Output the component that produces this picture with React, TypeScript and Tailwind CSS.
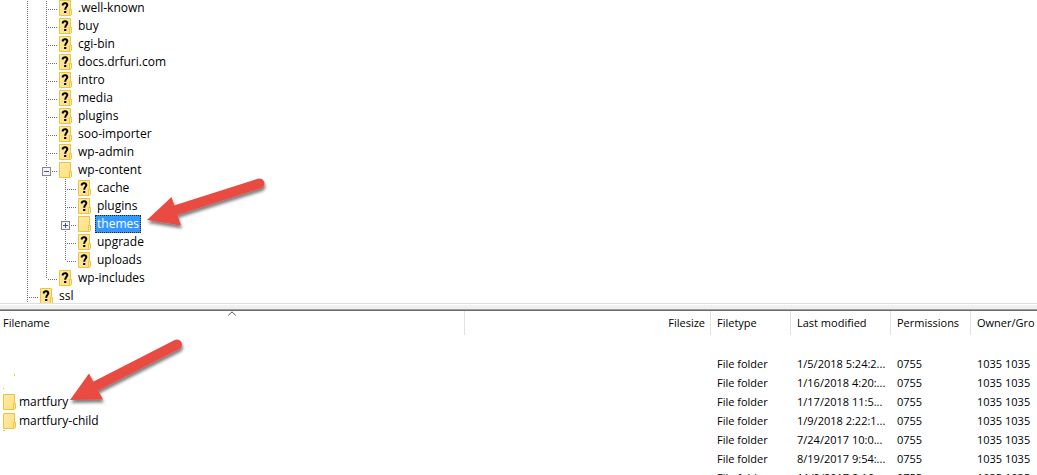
import React from "react";

type Kind = "pass" | "tee" | "end";
type Node = { name: string; guides: Kind[]; known?: boolean; expander?: "plus" | "minus"; selected?: boolean };

const nodes: Node[] = [
  { name: ".well-known", guides: ["pass", "tee"] },
  { name: "buy", guides: ["pass", "tee"] },
  { name: "cgi-bin", guides: ["pass", "tee"] },
  { name: "docs.drfuri.com", guides: ["pass", "tee"] },
  { name: "intro", guides: ["pass", "tee"] },
  { name: "media", guides: ["pass", "tee"] },
  { name: "plugins", guides: ["pass", "tee"] },
  { name: "soo-importer", guides: ["pass", "tee"] },
  { name: "wp-admin", guides: ["pass", "tee"] },
  { name: "wp-content", guides: ["pass", "tee"], known: true, expander: "minus" },
  { name: "cache", guides: ["pass", "pass", "tee"] },
  { name: "plugins", guides: ["pass", "pass", "tee"] },
  { name: "themes", guides: ["pass", "pass", "tee"], known: true, expander: "plus", selected: true },
  { name: "upgrade", guides: ["pass", "pass", "tee"] },
  { name: "uploads", guides: ["pass", "pass", "end"] },
  { name: "wp-includes", guides: ["pass", "end"] },
  { name: "ssl", guides: ["tee"] },
];

type FileRow = { name: string; type: string; date: string; perm: string; owner: string; specks?: string };

const files: FileRow[] = [
  { name: "", type: "", date: "", perm: "", owner: "" },
  { name: "", type: "File folder", date: "1/5/2018 5:24:2...", perm: "0755", owner: "1035 1035" },
  { name: "", type: "File folder", date: "1/16/2018 4:20:...", perm: "0755", owner: "1035 1035", specks: "M11 1h1v2h-1zM0 15h1v1h-1z" },
  { name: "martfury", type: "File folder", date: "1/17/2018 11:5...", perm: "0755", owner: "1035 1035" },
  { name: "martfury-child", type: "File folder", date: "1/9/2018 2:22:1...", perm: "0755", owner: "1035 1035" },
  { name: "", type: "File folder", date: "7/24/2017 10:0...", perm: "0755", owner: "1035 1035", specks: "M0 0h2v1h-2z" },
  { name: "", type: "File folder", date: "8/19/2017 9:54:...", perm: "0755", owner: "1035 1035" },
  { name: "", type: "File folder", date: "11/9/2017 2:16:...", perm: "0755", owner: "1035 1035" },
];

function Guide({ kind }: { kind: Kind }) {
  const branch = kind !== "pass";
  return (
    <svg className={branch ? "h-[18px] w-[13px] shrink-0" : "h-[18px] w-[19px] shrink-0"} shapeRendering="crispEdges" stroke="#6e6e6e" fill="none" aria-hidden="true">
      <path d={kind === "end" ? "M.5 0V10" : "M.5 0V18"} strokeDasharray="1 1" />
      {branch && <path d="M2 10.5H12" strokeDasharray="1 1" />}
    </svg>
  );
}

function Folder({ unknown }: { unknown?: boolean }) {
  return (
    <svg className="h-4 w-[13px] shrink-0" viewBox="0 0 13 16" aria-hidden="true">
      <defs>
        <linearGradient id="folder" x1="0" y1="0" x2="1" y2="1">
          <stop offset="0" stopColor="#ffeaa5" />
          <stop offset="1" stopColor="#ffdf80" />
        </linearGradient>
      </defs>
      <path d="M.5 .5H11.5V15.5H.5Z" fill="url(#folder)" stroke="#ebc540" />
      <path d="M10.5 9.5H12.5V14.5L11.5 15.5H10.5Z" fill="#ffe9a2" stroke="#ebc540" />
      {unknown && (
        <g>
          <path d="M3.8 5.4V4.2C4.600 2.700 8.300 2.700 8.300 5.100C8.300 6.900 6.200 6.900 6.200 9.700" fill="none" stroke="#000" strokeWidth="2" />
          <path d="M5.100 11H7.300V13H5.100Z" fill="#000" />
        </g>
      )}
    </svg>
  );
}

function Expander({ kind, label }: { kind: "plus" | "minus"; label: string }) {
  return (
    <button type="button" aria-label={`Toggle ${label}`} aria-expanded={kind === "minus"} className="absolute -left-1 top-[6px] block size-[9px]">
      <svg className="size-[9px]" viewBox="0 0 9 9" shapeRendering="crispEdges">
        <rect x=".5" y=".5" width="8" height="8" fill="#f3f3f3" stroke="#858585" />
        <path d={kind === "plus" ? "M2 4.5H7M4.5 2V7" : "M2 4.5H7"} stroke="#3b559f" fill="none" />
      </svg>
    </button>
  );
}

function TreeRow({ node }: { node: Node }) {
  const last = node.guides.length - 1;
  return (
    <li className="flex h-[18px] items-start pl-[27px]" role="treeitem" aria-selected={!!node.selected}>
      {node.guides.map((kind, i) => (
        <span key={i} className="relative flex shrink-0">
          <Guide kind={kind} />
          {i === last && node.expander && <Expander kind={node.expander} label={node.name} />}
        </span>
      ))}
      <span className="flex h-[18px] items-center">
        <Folder unknown={!node.known} />
      </span>
      <span
        className={
          node.selected
            ? "ml-1 h-[18px] bg-[#3399ff] px-[2px] leading-[18px] text-white outline-1 -outline-offset-1 outline-dotted outline-[#40220a]"
            : "ml-1 h-[18px] px-[2px] leading-[18px]"
        }
      >
        {node.name}
      </span>
    </li>
  );
}

function Arrow({ className, d, head, id }: { className: string; d: string; head: string; id: string }) {
  return (
    <svg className={className} aria-hidden="true">
      <defs>
        <filter id={id} x="-20%" y="-20%" width="150%" height="150%">
          <feDropShadow dx="1" dy="3" stdDeviation="1.8" floodColor="#000" floodOpacity=".5" />
        </filter>
      </defs>
      <g filter={`url(#${id})`}>
        <path d={d} stroke="#e94b43" strokeWidth="10" strokeLinecap="round" />
        <path d={head} fill="#e94b43" />
      </g>
    </svg>
  );
}

const th = "border-r border-[#e2e2e2] px-[6px] text-left font-normal";

export default function App() {
  return (
    <main className="relative flex h-screen flex-col overflow-hidden bg-white font-['Open_Sans','Noto_Sans',sans-serif] text-[12px] whitespace-nowrap text-black">
      <section className="h-[303px] shrink-0 overflow-hidden">
        <ul className="-mt-px" role="tree" aria-label="Remote directories">
          {nodes.map((n, i) => (
            <TreeRow key={i} node={n} />
          ))}
        </ul>
      </section>
      <div className="shrink-0 border-y border-t-[#e0e0e0] border-b-[#a0a0a0] pt-px">
        <div className="h-1 bg-[#f0f0f0]" />
      </div>
      <section className="min-h-0 grow overflow-hidden border-t border-[#696969]">
        <table className="w-full table-fixed border-separate border-spacing-0 text-[11px]">
          <colgroup>
            <col className="w-[465px]" />
            <col className="w-[246px]" />
            <col className="w-[80px]" />
            <col className="w-[100px]" />
            <col className="w-[80px]" />
            <col />
          </colgroup>
          <thead>
            <tr className="h-6">
              <th className="relative border-r border-[#e2e2e2] pl-[3px] text-left font-normal">
                Filename
                <svg className="absolute top-0 left-1/2 h-[5px] w-[9px] -translate-x-1/2" viewBox="0 0 9 5" fill="none" stroke="#555" aria-hidden="true">
                  <path d="M.7 4.5L4.5 .8L8.3 4.5" />
                </svg>
              </th>
              <th className="border-r border-[#e2e2e2] pr-[5px] text-right font-normal">Filesize</th>
              <th className={th}>Filetype</th>
              <th className={th}>Last modified</th>
              <th className={th}>Permissions</th>
              <th className="overflow-hidden pl-[6px] text-left font-normal">Owner/Gro</th>
            </tr>
          </thead>
          <tbody>
            {files.map((f, i) => (
              <tr key={i} className="h-[19px] leading-[19px]">
                <td className="p-0 pl-[3px] text-[12px]">
                  {f.name && (
                    <span className="flex items-center gap-[3px]">
                      <Folder />
                      {f.name}
                    </span>
                  )}
                  {f.specks && (
                    <svg className="block h-[19px] w-[13px]" fill="#ebc540" aria-hidden="true">
                      <path d={f.specks} />
                    </svg>
                  )}
                </td>
                <td className="p-0" />
                <td className="p-0 pl-[6px]">{f.type}</td>
                <td className="p-0 pl-[6px]">{f.date}</td>
                <td className="p-0 pl-[6px]">{f.perm}</td>
                <td className="p-0 pl-[6px]">{f.owner}</td>
              </tr>
            ))}
          </tbody>
        </table>
      </section>
      <Arrow id="shadow-a" className="absolute top-[165px] left-[140px] h-[75px] w-[140px]" d="M30 47L119.500 18.500" head="M7 55L31.500 32L41 60.500Z" />
      <Arrow id="shadow-b" className="absolute top-[330px] left-[60px] h-[85px] w-[135px]" d="M30 59L117 14.500" head="M10 70L29 43.500L43 69.500Z" />
    </main>
  );
}
